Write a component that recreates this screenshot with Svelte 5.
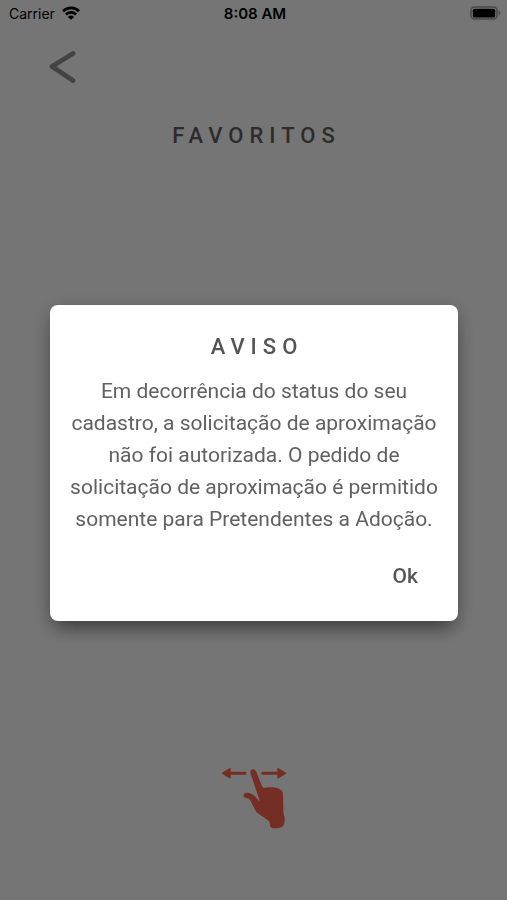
<script lang="ts">
	let open = $state(true);

	const title = 'AVISO';
	const message =
		'Em decorrência do status do seu cadastro, a solicitação de aproximação não foi autorizada. O pedido de solicitação de aproximação é permitido somente para Pretendentes a Adoção.';

	function close() {
		open = false;
	}

	function handleKeydown(e: KeyboardEvent) {
		if (e.key === 'Escape') close();
	}
</script>

<svelte:window onkeydown={handleKeydown} />

<div class="screen">
	<div class="status-bar">
		<div class="carrier">
			<span>Carrier</span>
			<svg class="wifi" viewBox="0 0 18 14" fill="none" stroke="currentColor" stroke-width="2.7">
				<path d="M1 5.2a11.4 11.4 0 0116 0M3.9 8.5a7.3 7.3 0 0110.2 0" />
				<path d="M9 13.8L5.9 10.9a4.4 4.4 0 016.2 0z" fill="currentColor" stroke="none" />
			</svg>
		</div>
		<span class="time">8:08 AM</span>
		<svg class="battery" viewBox="0 0 31 14">
			<rect x="1" y="1" width="26" height="12" rx="3.5" fill="none" stroke="#a0a0a0" stroke-width="1.6" />
			<rect x="2.8" y="2.8" width="22.4" height="8.6" rx="1.5" />
			<path d="M28.5 4.5v5q2-.8 2-2.5t-2-2.5z" fill="#a0a0a0" />
		</svg>
	</div>

	<header>
		<button class="back-btn" aria-label="Voltar">
			<svg viewBox="0 0 28 34" fill="none" stroke="currentColor" stroke-width="4.8" stroke-linecap="round">
				<path d="M25 3.5L4 16.5 25 30.5" stroke-linejoin="round" />
			</svg>
		</button>
		<h1>FAVORITOS</h1>
	</header>

	<footer>
		<svg class="swipe" viewBox="33 33 198 189" aria-hidden="true">
			<path
				d="M62 55h43M158 55h44"
				fill="none"
				stroke="currentColor"
				stroke-width="9"
				stroke-linecap="round"
			/>
			<path
				d="M34 55L58 40q4-2 4 2v26q0 4-4 2zM230 55L206 40q-4-2-4 2v26q0 4 4 2z"
				fill="currentColor"
			/>
			<path
				d="M121 53c-2-12 13-14 17-4l19 46c2 4 5 4 9 3 12-2 30-1 41 3 8 3 12 9 12 17l1 46c0 8 1 14 3 20 2 7 1 13 0 19-1 11-11 16-24 17-10 1-19-1-19-9 0-8-2-13-8-17-14-9-30-17-38-31l-12-25c-3-6-8-8-15-9-10-2-8-16 3-16 11 0 20 5 27 13l8 10c3 3 4 2 3-2z"
				fill="currentColor"
			/>
		</svg>
	</footer>
</div>

{#if open}
	<div class="backdrop">
		<div
			class="dialog"
			role="alertdialog"
			aria-modal="true"
			aria-labelledby="dialog-title"
			aria-describedby="dialog-message"
		>
			<h2 id="dialog-title">{title}</h2>
			<p id="dialog-message">{message}</p>
			<div class="actions">
				<button class="ok-btn" onclick={close}>Ok</button>
			</div>
		</div>
	</div>
{/if}

<style>
	:global(body) {
		margin: 0;
		background: #fff;
		font-family: Roboto, sans-serif;
	}

	.screen {
		display: flex;
		flex-direction: column;
		min-height: 100vh;
	}

	.status-bar {
		display: grid;
		grid-template-columns: 1fr auto 1fr;
		align-items: center;
		height: 26px;
		padding: 0 6px 0 9px;
		color: #000;
		font-family: Inter, sans-serif;
		font-size: 14px;
	}

	.carrier {
		display: flex;
		align-items: center;
		gap: 7px;
	}

	.wifi {
		width: 18px;
		height: 14px;
	}

	.time {
		font-size: 15px;
		font-weight: 600;
	}

	.battery {
		width: 31px;
		height: 14px;
		justify-self: end;
	}

	header {
		display: flex;
		flex-direction: column;
		padding: 24px 48px 0;
	}

	.back-btn {
		align-self: flex-start;
		padding: 0;
		border: none;
		background: none;
		color: #929292;
		cursor: pointer;
	}

	.back-btn svg {
		display: block;
		width: 28px;
		height: 34px;
	}

	h1,
	h2 {
		margin: 0;
		/* evens out the spacing after the last letter */
		padding-left: 6px;
		font-size: 22px;
		line-height: 32px;
		font-weight: 500;
		letter-spacing: 6px;
		text-align: center;
	}

	h1 {
		margin-top: 36px;
		color: #616161;
	}

	h2 {
		color: #555;
	}

	footer {
		display: flex;
		justify-content: center;
		margin-top: auto;
		padding-bottom: 71px;
	}

	.swipe {
		width: 66px;
		height: 63px;
		color: #ff6450;
	}

	.backdrop {
		position: fixed;
		inset: 0;
		display: flex;
		align-items: center;
		justify-content: center;
		padding: 26px 49px 0 50px;
		background: rgba(0, 0, 0, 0.54);
	}

	.dialog {
		width: 100%;
		padding: 26px 16px 20px;
		box-sizing: border-box;
		border-radius: 8px;
		background: #fff;
		box-shadow:
			0 14px 18px -8px rgba(0, 0, 0, 0.3),
			0 6px 20px rgba(0, 0, 0, 0.3);
	}

	p {
		margin: 12px 0 0;
		font-size: 21px;
		line-height: 32px;
		text-align: center;
		color: #616161;
	}

	.actions {
		display: flex;
		justify-content: flex-end;
		margin-top: 18px;
	}

	.ok-btn {
		padding: 7px 24px 9px;
		border: none;
		background: none;
		color: #555;
		font-family: inherit;
		font-size: 21px;
		line-height: 32px;
		font-weight: 500;
		cursor: pointer;
	}
</style>
